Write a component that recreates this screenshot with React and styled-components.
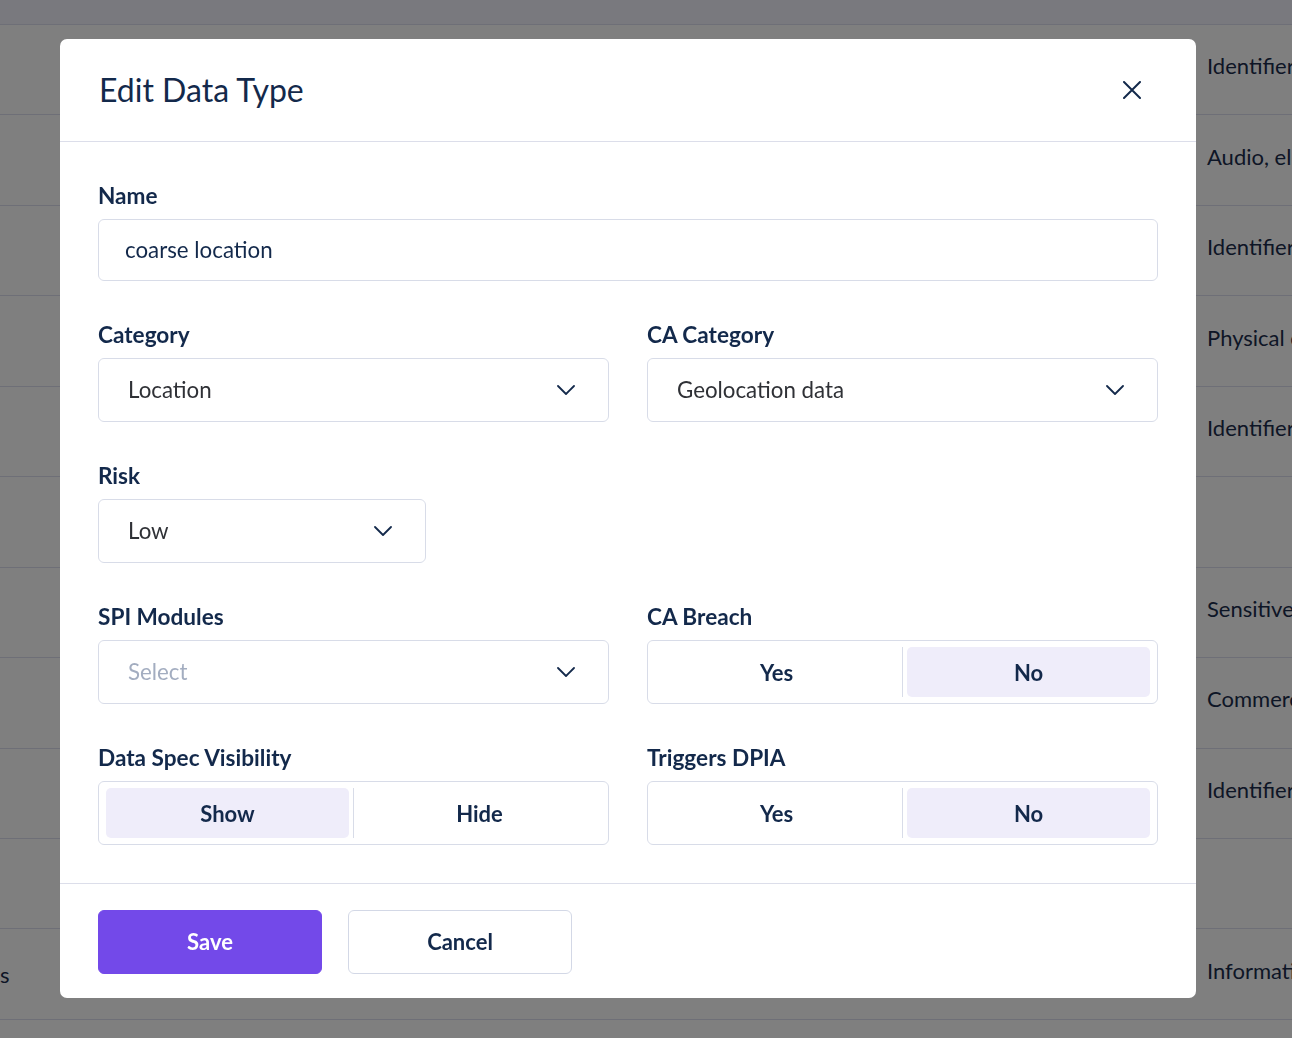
import React from 'react';
import styled, { createGlobalStyle } from 'styled-components';

const GlobalStyle = createGlobalStyle`
*{
    box-sizing:border-box;
}
body{
    margin:0;
    font-family:Lato, "Open Sans", sans-serif;
    background:#ffffff;
}
`;

const rows = [
  { left: '', right: 'Identifiers' },
  { left: '', right: 'Audio, electronic' },
  { left: '', right: 'Identifiers' },
  { left: '', right: 'Physical characteristics' },
  { left: '', right: 'Identifiers' },
  { left: '', right: '' },
  { left: '', right: 'Sensitive' },
  { left: '', right: 'Commercial' },
  { left: '', right: 'Identifiers' },
  { left: '', right: '' },
  { left: 's', right: 'Information' },
  { left: '', right: '' },
];

const Chevron = () => (
  <svg width="18" height="10" viewBox="0 0 18 10" fill="none">
    <path d="M1 1l8 8 8-8" stroke="#13294b" strokeWidth="1.8" strokeLinecap="round" strokeLinejoin="round" />
  </svg>
);

const CloseIcon = () => (
  <svg width="18" height="18" viewBox="0 0 18 18" fill="none">
    <path d="M1 1l16 16M17 1L1 17" stroke="#13294b" strokeWidth="2" strokeLinecap="round" />
  </svg>
);

const SelectBox = ({ value, placeholder, width }) => (
  <Select $width={width}>
    <SelectValue $empty={!value}>{value || placeholder}</SelectValue>
    <Chevron />
  </Select>
);

const Toggle = ({ options, active }) => (
  <ToggleGroup>
    {options.map((opt, i) => (
      <React.Fragment key={opt}>
        {i > 0 && <Sep />}
        <ToggleItem $active={opt === active}>{opt}</ToggleItem>
      </React.Fragment>
    ))}
  </ToggleGroup>
);

const App = () => {
  return (
    <>
      <GlobalStyle />
      <Page>
        <TableHead />
        {rows.map((r, i) => (
          <Row key={i}>
            <LeftCell>{r.left}</LeftCell>
            <RightCell>{r.right}</RightCell>
          </Row>
        ))}
        <Overlay />
      </Page>
      <Modal>
        <Header>
          <Title>Edit Data Type</Title>
          <CloseButton>
            <CloseIcon />
          </CloseButton>
        </Header>
        <Body>
          <Field $full>
            <Label>Name</Label>
            <Input>coarse location</Input>
          </Field>
          <Field>
            <Label>Category</Label>
            <SelectBox value="Location" />
          </Field>
          <Field>
            <Label>CA Category</Label>
            <SelectBox value="Geolocation data" />
          </Field>
          <Field $full>
            <Label>Risk</Label>
            <SelectBox value="Low" width="328px" />
          </Field>
          <Field>
            <Label>SPI Modules</Label>
            <SelectBox placeholder="Select" />
          </Field>
          <Field>
            <Label>CA Breach</Label>
            <Toggle options={['Yes', 'No']} active="No" />
          </Field>
          <Field>
            <Label>Data Spec Visibility</Label>
            <Toggle options={['Show', 'Hide']} active="Show" />
          </Field>
          <Field>
            <Label>Triggers DPIA</Label>
            <Toggle options={['Yes', 'No']} active="No" />
          </Field>
        </Body>
        <Footer>
          <Button $primary>Save</Button>
          <Button>Cancel</Button>
        </Footer>
      </Modal>
    </>
  );
};

const Page = styled.div`
position:relative;
height:1038px;
overflow:hidden;
background:#ffffff;
`;
const Overlay = styled.div`
position:absolute;
inset:0;
background:rgba(0,0,0,0.5);
`;
const TableHead = styled.div`
height:25px;
background:#f2f3fd;
border-bottom:1px solid #dcdeee;
`;
const Row = styled.div`
display:flex;
align-items:center;
height:90.45px;
border-bottom:1px solid #dcdeee;
white-space:nowrap;
font-size:22px;
color:#1b2c4c;
padding-bottom:8px;
`;
const LeftCell = styled.div`
width:1207px;
flex-shrink:0;
padding-top:8px;
`;
const RightCell = styled.div`
flex-shrink:0;
`;

const Modal = styled.div`
position:fixed;
left:60px;
top:39px;
width:1136px;
height:959px;
background:#ffffff;
border-radius:7px;
display:flex;
flex-direction:column;
`;
const Header = styled.div`
height:103px;
display:flex;
align-items:center;
justify-content:space-between;
padding:0 55px 0 39px;
border-bottom:1px solid #dcdeea;
`;
const Title = styled.h2`
margin:0;
font-size:32px;
font-weight:400;
color:#13294b;
padding-bottom:2px;
`;
const CloseButton = styled.button`
border:none;
background:none;
padding:0;
display:flex;
cursor:pointer;
`;
const Body = styled.div`
display:grid;
grid-template-columns:1fr 1fr;
column-gap:38px;
row-gap:42px;
padding:42px 38px 38px 38px;
border-bottom:1px solid #dcdeea;
`;
const Field = styled.div`
display:flex;
flex-direction:column;
grid-column:${p => (p.$full ? '1 / -1' : 'auto')};
`;
const Label = styled.label`
font-size:22.6px;
font-weight:700;
line-height:24px;
color:#13294b;
margin-bottom:11px;
`;
const Input = styled.div`
height:62px;
border:1px solid #d8dce8;
border-radius:6px;
display:flex;
align-items:center;
padding:0 0 2px 26px;
font-size:22.3px;
color:#13294b;
`;
const Select = styled.div`
width:${p => p.$width || '100%'};
height:64px;
border:1px solid #d8dce8;
border-radius:6px;
display:flex;
align-items:center;
justify-content:space-between;
padding:0 33px 0 29px;
`;
const SelectValue = styled.span`
font-size:22.3px;
margin-bottom:2px;
color:${p => (p.$empty ? '#a3adc0' : '#2f3136')};
`;
const ToggleGroup = styled.div`
height:64px;
border:1px solid #d8dce8;
border-radius:6px;
display:flex;
align-items:stretch;
padding:6px 7px;
`;
const Sep = styled.div`
width:1px;
background:#d8dce8;
margin:0 4px;
`;
const ToggleItem = styled.div`
flex:1;
display:flex;
align-items:center;
justify-content:center;
border-radius:5px;
background:${p => (p.$active ? '#efedfa' : 'transparent')};
font-size:22px;
font-weight:700;
color:#13294b;
`;
const Footer = styled.div`
display:flex;
gap:26px;
padding:26px 38px 24px 38px;
`;
const Button = styled.button`
width:224px;
height:64px;
border-radius:6px;
font-family:Lato, "Open Sans", sans-serif;
font-size:22px;
font-weight:700;
cursor:pointer;
padding-bottom:2px;
background:${p => (p.$primary ? '#7349e9' : '#ffffff')};
color:${p => (p.$primary ? '#ffffff' : '#13294b')};
border:1px solid ${p => (p.$primary ? '#7349e9' : '#d3d8e6')};
`;

export default App;
